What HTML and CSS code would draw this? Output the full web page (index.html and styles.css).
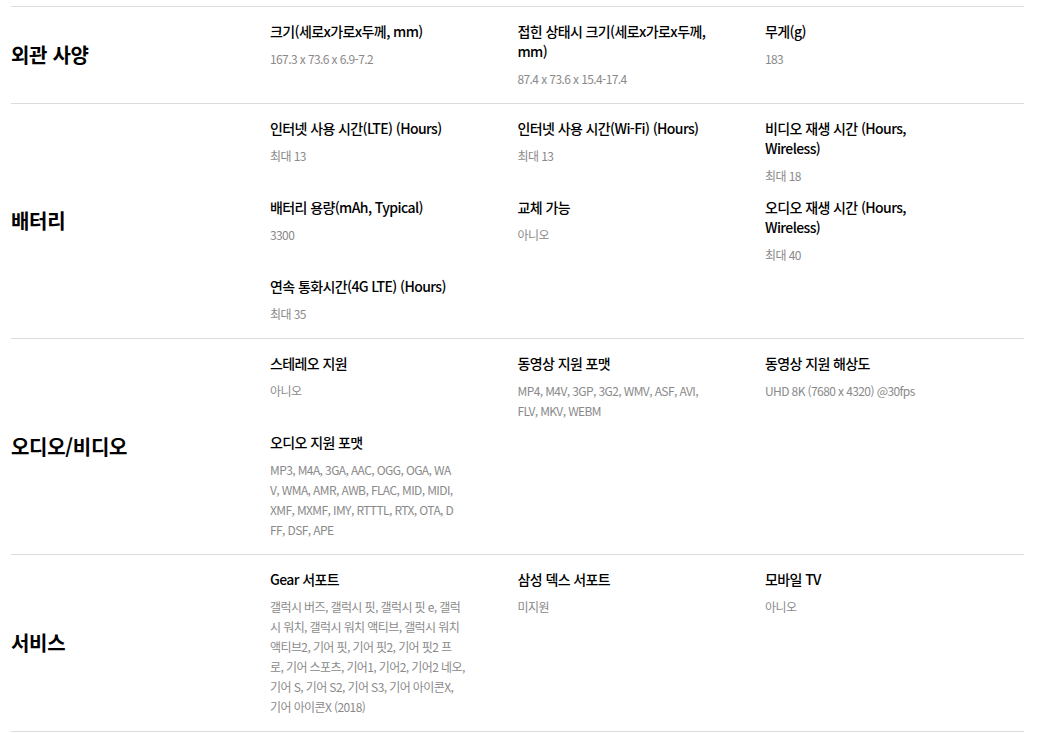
FILE: index.html
```html
<!DOCTYPE html>
<html lang="ko">
<head>
<meta charset="utf-8">
<title>사양</title>
<link rel="stylesheet" href="styles.css">
</head>
<body>
<div class="specs">
  <section class="spec-row">
    <h3 class="spec-cat">외관 사양</h3>
    <ul class="spec-list">
      <li class="spec-item"><p class="spec-title">크기(세로x가로x두께, mm)</p><p class="spec-value">167.3 x 73.6 x 6.9-7.2</p></li>
      <li class="spec-item"><p class="spec-title">접힌 상태시 크기(세로x가로x두께, mm)</p><p class="spec-value">87.4 x 73.6 x 15.4-17.4</p></li>
      <li class="spec-item"><p class="spec-title">무게(g)</p><p class="spec-value">183</p></li>
    </ul>
  </section>
  <section class="spec-row">
    <h3 class="spec-cat">배터리</h3>
    <ul class="spec-list">
      <li class="spec-item"><p class="spec-title">인터넷 사용 시간(LTE) (Hours)</p><p class="spec-value">최대 13</p></li>
      <li class="spec-item"><p class="spec-title">인터넷 사용 시간(Wi-Fi) (Hours)</p><p class="spec-value">최대 13</p></li>
      <li class="spec-item"><p class="spec-title">비디오 재생 시간 (Hours, Wireless)</p><p class="spec-value">최대 18</p></li>
      <li class="spec-item"><p class="spec-title">배터리 용량(mAh, Typical)</p><p class="spec-value">3300</p></li>
      <li class="spec-item"><p class="spec-title">교체 가능</p><p class="spec-value">아니오</p></li>
      <li class="spec-item"><p class="spec-title">오디오 재생 시간 (Hours, Wireless)</p><p class="spec-value">최대 40</p></li>
      <li class="spec-item"><p class="spec-title">연속 통화시간(4G LTE) (Hours)</p><p class="spec-value">최대 35</p></li>
    </ul>
  </section>
  <section class="spec-row">
    <h3 class="spec-cat">오디오/비디오</h3>
    <ul class="spec-list">
      <li class="spec-item"><p class="spec-title">스테레오 지원</p><p class="spec-value">아니오</p></li>
      <li class="spec-item"><p class="spec-title">동영상 지원 포맷</p><p class="spec-value">MP4, M4V, 3GP, 3G2, WMV, ASF, AVI,<br>FLV, MKV, WEBM</p></li>
      <li class="spec-item"><p class="spec-title">동영상 지원 해상도</p><p class="spec-value">UHD 8K (7680 x 4320) @30fps</p></li>
      <li class="spec-item"><p class="spec-title">오디오 지원 포맷</p><p class="spec-value">MP3, M4A, 3GA, AAC, OGG, OGA, WA<br>V, WMA, AMR, AWB, FLAC, MID, MIDI,<br>XMF, MXMF, IMY, RTTTL, RTX, OTA, D<br>FF, DSF, APE</p></li>
    </ul>
  </section>
  <section class="spec-row">
    <h3 class="spec-cat">서비스</h3>
    <ul class="spec-list">
      <li class="spec-item"><p class="spec-title">Gear 서포트</p><p class="spec-value">갤럭시 버즈, 갤럭시 핏, 갤럭시 핏 e, 갤럭<br>시 워치, 갤럭시 워치 액티브, 갤럭시 워치<br>액티브2, 기어 핏, 기어 핏2, 기어 핏2 프<br>로, 기어 스포츠, 기어1, 기어2, 기어2 네오,<br>기어 S, 기어 S2, 기어 S3, 기어 아이콘X,<br>기어 아이콘X (2018)</p></li>
      <li class="spec-item"><p class="spec-title">삼성 덱스 서포트</p><p class="spec-value">미지원</p></li>
      <li class="spec-item"><p class="spec-title">모바일 TV</p><p class="spec-value">아니오</p></li>
    </ul>
  </section>
</div>
</body>
</html>
```
FILE: styles.css
```css
html, body {
  margin: 0;
  padding: 0;
  background: #fff;
}

body {
  font-family: "Noto Sans CJK KR", "Noto Sans", sans-serif;
  color: #000;
}

.specs {
  width: 1013px;
  margin-left: 11px;
  padding-top: 6px;
}

.spec-row {
  display: grid;
  grid-template-columns: 259px 1fr;
  align-items: center;
  border-top: 1px solid #dcdcdc;
}

.spec-row:last-child {
  border-bottom: 1px solid #dcdcdc;
}

.spec-cat {
  margin: 0;
  font-size: 20px;
  font-weight: 700;
  line-height: 26px;
  letter-spacing: -0.3px;
}

.spec-list {
  display: grid;
  grid-template-columns: repeat(3, 247.5px);
  row-gap: 11px;
  margin: 0;
  padding: 14px 0;
  list-style: none;
}

.spec-item {
  padding-right: 51px;
}

.spec-title {
  margin: 0 0 8px;
  font-size: 14px;
  line-height: 20px;
  font-weight: 500;
  letter-spacing: -0.6px;
  color: #000;
}

.spec-value {
  margin: 0;
  font-size: 12px;
  line-height: 20px;
  letter-spacing: -0.6px;
  color: #8a8a8a;
  word-break: break-all;
}
```
